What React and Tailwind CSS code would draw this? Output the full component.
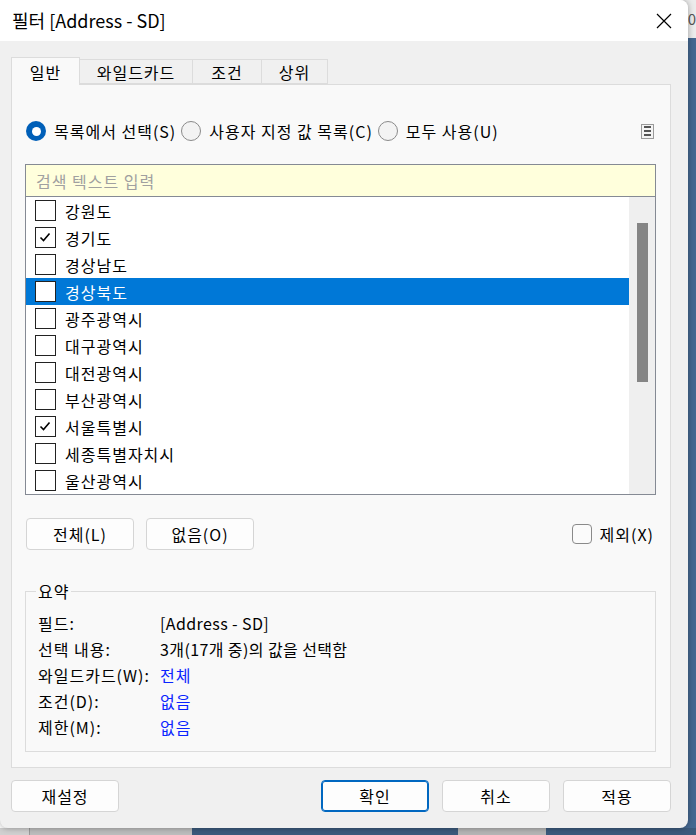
import React from 'react';

const ITEMS = [
  { label: '강원도', checked: false },
  { label: '경기도', checked: true },
  { label: '경상남도', checked: false },
  { label: '경상북도', checked: false, selected: true },
  { label: '광주광역시', checked: false },
  { label: '대구광역시', checked: false },
  { label: '대전광역시', checked: false },
  { label: '부산광역시', checked: false },
  { label: '서울특별시', checked: true },
  { label: '세종특별자치시', checked: false },
  { label: '울산광역시', checked: false },
];

const SUMMARY = [
  { label: '필드:', value: '[Address - SD]' },
  { label: '선택 내용:', value: '3개(17개 중)의 값을 선택함' },
  { label: '와일드카드(W):', value: '전체', link: true },
  { label: '조건(D):', value: '없음', link: true },
  { label: '제한(M):', value: '없음', link: true },
];

function Check() {
  return (
    <svg width="12" height="12" viewBox="0 0 12 12" fill="none" stroke="#000" strokeWidth="1.6">
      <path d="M1.5 6.5 L4.5 9.5 L10.5 2.5" />
    </svg>
  );
}

function Radio({ on, label }) {
  return (
    <div className="flex items-center gap-[8px]">
      {on ? (
        <span className="w-[20px] h-[20px] rounded-full bg-[#005fb8] flex items-center justify-center">
          <span className="w-[9px] h-[9px] rounded-full bg-white" />
        </span>
      ) : (
        <span className="w-[20px] h-[20px] rounded-full border border-[#8a8a8a] bg-[#f3f3f3]" />
      )}
      <span>{label}</span>
    </div>
  );
}

function Btn({ children, w = 'w-[108px]', primary }) {
  return (
    <button
      className={`${w} h-[32px] rounded-[4px] bg-[#fdfdfd] text-[16px] tracking-[1px] ${
        primary ? 'border border-[#0067c0] shadow-[inset_0_0_0_1px_#0067c0]' : 'border border-[#d5d5d5]'
      }`}
    >
      {children}
    </button>
  );
}

export default function App() {
  return (
    <div
      className="relative w-[696px] h-[835px] overflow-hidden flex flex-col text-black"
      style={{ fontFamily: '"Noto Sans CJK KR", "Noto Sans", sans-serif' }}
    >
      {/* desktop behind the dialog */}
      <div className="flex flex-1">
        <div className="w-[688px]" />
        <div className="flex-1 flex flex-col">
          <div className="h-[38px] bg-[#ececec] text-[15px] text-[#555] leading-[38px] overflow-hidden">40</div>
          <div className="flex-1 bg-[#456891]" />
        </div>
      </div>
      <div className="h-[7px] flex">
        <div className="w-[30px] bg-[#d0d0d0] border-r border-[#999]" />
        <div className="w-[162px] bg-[#bdbdbd]" />
        <div className="w-[266px] bg-[#3b5a7c]" />
        <div className="w-[88px] bg-[#b5b5b5]" />
        <div className="flex-1 bg-[#3b5a7c]" />
      </div>

      {/* dialog window */}
      <div className="absolute top-0 left-0 w-[688px] h-[828px] rounded-r-[8px] rounded-bl-[8px] overflow-hidden bg-[#f0f0f0] flex flex-col shadow-[0_0_6px_rgba(0,0,0,0.35)]">
        <div className="h-[41px] bg-white flex items-center justify-between pl-[12px] pr-[16px]">
          <span className="text-[18px]">필터 [Address - SD]</span>
          <svg width="16" height="16" viewBox="0 0 16 16" stroke="#000" strokeWidth="1.2">
            <path d="M1 1 L15 15 M15 1 L1 15" />
          </svg>
        </div>

        <div className="flex-1 flex flex-col px-[11px] pt-[16px] text-[16px] tracking-[1px]">
          {/* tabs */}
          <div className="flex items-end h-[27px]">
            <div className="w-[69px] h-[28px] bg-[#f9f9f9] border border-b-0 border-[#dcdcdc] flex items-center justify-center -mb-px relative z-10">
              일반
            </div>
            <div className="w-[113px] h-[25px] border border-l-0 border-[#dcdcdc] flex items-center justify-center">와일드카드</div>
            <div className="w-[69px] h-[25px] border border-l-0 border-[#dcdcdc] flex items-center justify-center">조건</div>
            <div className="w-[66px] h-[25px] border border-l-0 border-[#dcdcdc] flex items-center justify-center">상위</div>
          </div>

          {/* panel */}
          <div className="w-[660px] h-[684px] bg-[#f9f9f9] border border-[#dcdcdc] flex flex-col px-[13px] pt-[35px] pb-[15px]">
            <div className="flex items-center h-[22px] pl-[1px]">
              <div className="flex items-center gap-[5px]">
                <Radio on label="목록에서 선택(S)" />
                <Radio label="사용자 지정 값 목록(C)" />
                <Radio label="모두 사용(U)" />
              </div>
              <div className="ml-auto mr-[3px] w-[13px] h-[15px] border border-[#9a9a9a] bg-[#f4f4f4] flex flex-col items-center justify-center gap-[2px]">
                <span className="w-[7px] h-[2px] bg-[#555]" />
                <span className="w-[7px] h-[2px] bg-[#555]" />
                <span className="w-[7px] h-[2px] bg-[#555]" />
              </div>
            </div>

            {/* list box */}
            <div className="mt-[22px] w-[631px] h-[331px] border border-[#858a94] bg-white flex flex-col">
              <div className="h-[32px] bg-[#ffffdc] border-b border-[#858a94] flex items-center pl-[10px] text-[#a0a0a0]">
                검색 텍스트 입력
              </div>
              <div className="flex flex-1 overflow-hidden">
                <div className="flex-1 flex flex-col overflow-hidden">
                  {ITEMS.map((it) => (
                    <div
                      key={it.label}
                      className={`h-[27px] shrink-0 flex items-center pl-[9px] gap-[9px] ${it.selected ? 'bg-[#0078d7] text-white' : ''}`}
                    >
                      <span className="w-[21px] h-[21px] border border-[#222] bg-white flex items-start justify-start pl-[3px] pt-[3px]">
                        {it.checked && <Check />}
                      </span>
                      <span>{it.label}</span>
                    </div>
                  ))}
                </div>
                <div className="w-[26px] bg-[#efefef] flex flex-col items-center pt-[26px]">
                  <div className="w-[11px] h-[159px] bg-[#858585]" />
                </div>
              </div>
            </div>

            {/* buttons row */}
            <div className="mt-[23px] flex items-center pl-[1px]">
              <div className="flex gap-[12px]">
                <Btn>전체(L)</Btn>
                <Btn>없음(O)</Btn>
              </div>
              <div className="ml-auto flex items-center gap-[8px] pr-[3px]">
                <span className="w-[20px] h-[20px] rounded-[4px] border border-[#8a8a8a] bg-[#fbfbfb]" />
                <span>제외(X)</span>
              </div>
            </div>

            {/* summary group */}
            <fieldset className="mt-[32px] w-[631px] flex-1 border border-[#dcdcdc] px-[12px] pb-[8px]">
              <legend className="-ml-[2px] px-[2px] leading-[18px]">요약</legend>
              <div className="flex flex-col pt-[10px]">
                {SUMMARY.map((r) => (
                  <div key={r.label} className="flex h-[26px] items-center">
                    <span className="w-[122px]">{r.label}</span>
                    <span className={r.link ? 'text-[#0a24ff]' : 'tracking-[0.4px]'}>{r.value}</span>
                  </div>
                ))}
              </div>
            </fieldset>
          </div>

          {/* footer buttons */}
          <div className="flex items-center mt-[12px] pr-[6px]">
            <Btn>재설정</Btn>
            <div className="ml-auto flex gap-[13px]">
              <Btn primary>확인</Btn>
              <Btn>취소</Btn>
              <Btn>적용</Btn>
            </div>
          </div>
        </div>
      </div>
    </div>
  );
}
